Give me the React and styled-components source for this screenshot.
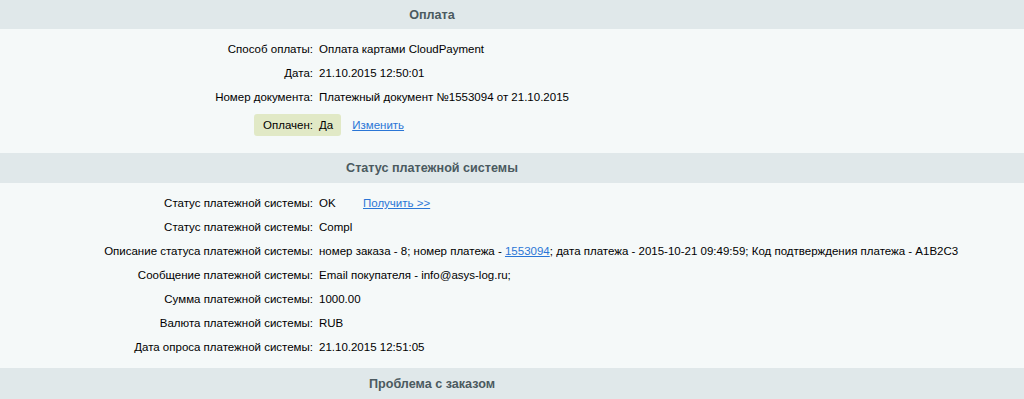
import React from "react";
import styled, { createGlobalStyle } from "styled-components";

const Global = createGlobalStyle`
  html, body { margin: 0; padding: 0; background: #f5f9f9; }
  body { font-family: "Liberation Sans", Arial, sans-serif; font-size: 11.5px; color: #000; }
`;

const Page = styled.div`
  width: 1024px;
  display: flex;
  flex-direction: column;
`;

const Header = styled.div`
  height: ${(p) => p.$h || 30}px;
  background: #e0e8ea;
  display: flex;
  align-items: center;
  justify-content: center;
  padding-right: 160px;
  font-weight: bold;
  font-size: 12.6px;
  color: #4b5a60;
`;

const Body = styled.div`
  background: #f5f9f9;
  padding: ${(p) => p.$pt}px 0 ${(p) => p.$pb}px;
  display: flex;
  flex-direction: column;
`;

const Row = styled.div`
  display: grid;
  grid-template-columns: 313px 1fr;
  column-gap: 6px;
  height: 24px;
  align-items: center;
`;

const Label = styled.div`
  text-align: right;
  white-space: nowrap;
`;

const Value = styled.div`
  white-space: nowrap;
  display: flex;
  align-items: center;
`;

const PaidRow = styled.div`
  display: grid;
  grid-template-columns: 313px 1fr;
  height: 22px;
  margin-top: 5px;
  align-items: stretch;
`;

const PaidLabel = styled.div`
  display: flex;
  justify-content: flex-end;
  align-items: stretch;
`;

const PaidValue = styled.div`
  display: flex;
  align-items: stretch;
  white-space: nowrap;
`;

const Pill = styled.span`
  display: flex;
  align-items: center;
  background: #e1e9c6;
  padding: ${(p) => (p.$side === "left" ? "0 0 0 9px" : "0 8px 0 6px")};
  border-radius: ${(p) => (p.$side === "left" ? "3px 0 0 3px" : "0 3px 3px 0")};
`;

const Link = styled.a`
  color: #2a76d6;
  text-decoration: underline;
  cursor: pointer;
  margin-left: ${(p) => p.$ml || 0}px;
  display: ${(p) => (p.$flex ? "flex" : "inline")};
  align-items: center;
`;

const Status = styled.span`
  display: inline-block;
  width: 44px;
`;

export default function App() {
  const rows2 = [
    ["Статус платежной системы:", "Compl"],
    [
      "Описание статуса платежной системы:",
      <>
        номер заказа - 8; номер платежа -&nbsp;<Link>1553094</Link>; дата платежа - 2015-10-21 09:49:59; Код подтверждения платежа - A1B2C3
      </>,
    ],
    ["Сообщение платежной системы:", "Email покупателя - info@asys-log.ru;"],
    ["Сумма платежной системы:", "1000.00"],
    ["Валюта платежной системы:", "RUB"],
    ["Дата опроса платежной системы:", "21.10.2015 12:51:05"],
  ];
  return (
    <Page>
      <Global />
      <Header $h={29}>Оплата</Header>
      <Body $pt={8} $pb={17}>
        <Row>
          <Label>Способ оплаты:</Label>
          <Value>Оплата картами CloudPayment</Value>
        </Row>
        <Row>
          <Label>Дата:</Label>
          <Value>21.10.2015 12:50:01</Value>
        </Row>
        <Row>
          <Label>Номер документа:</Label>
          <Value>Платежный документ №1553094 от 21.10.2015</Value>
        </Row>
        <PaidRow>
          <PaidLabel>
            <Pill $side="left">Оплачен:</Pill>
          </PaidLabel>
          <PaidValue>
            <Pill $side="right">Да</Pill>
            <Link $ml={11} $flex>Изменить</Link>
          </PaidValue>
        </PaidRow>
      </Body>
      <Header>Статус платежной системы</Header>
      <Body $pt={8} $pb={9}>
        <Row>
          <Label>Статус платежной системы:</Label>
          <Value>
            <Status>OK</Status>
            <Link>Получить &gt;&gt;</Link>
          </Value>
        </Row>
        {rows2.map(([l, v], i) => (
          <Row key={i}>
            <Label>{l}</Label>
            <Value>{v}</Value>
          </Row>
        ))}
      </Body>
      <Header $h={31}>Проблема с заказом</Header>
    </Page>
  );
}
